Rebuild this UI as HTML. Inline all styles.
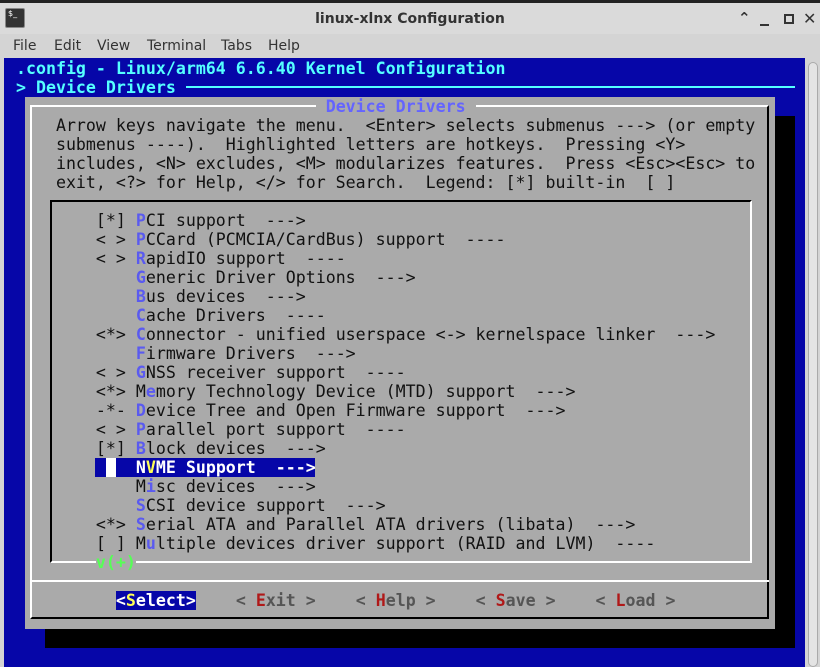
<!DOCTYPE html>
<html><head><meta charset="utf-8"><style>
*{margin:0;padding:0;box-sizing:border-box}
body{width:820px;height:667px;overflow:hidden;background:#d4d4d4;position:relative;font-family:"DejaVu Sans",sans-serif}
.a{position:absolute}
.t{position:absolute;left:6px;height:19px;line-height:19px;font-family:"DejaVu Sans Mono","Liberation Mono",monospace;font-size:16.6px;white-space:pre;color:#111}
.h{color:#5a5af0;font-weight:bold}
.c{color:#5ff;font-weight:bold}
</style></head><body>
<div class="a" style="left:0;top:0;width:820px;height:3px;background:#222"></div>
<div class="a" style="left:0;top:3px;width:820px;height:31px;background:#dadada"></div>
<div class="a" style="left:5px;top:8px;width:20px;height:20px;background:#333;border:1px solid #888;border-radius:2px;color:#fff;font-size:8px;line-height:10px;padding-left:2px">$_</div>
<div class="a" style="left:0;top:11px;width:820px;text-align:center;font-size:14px;font-weight:bold;color:#333">linux-xlnx Configuration</div>
<div class="a" style="left:738px;top:9px;font-size:15px;color:#333;font-weight:bold">&#8963;</div>
<div class="a" style="left:760px;top:24px;width:9px;height:2px;background:#333"></div>
<div class="a" style="left:784px;top:14px;width:10px;height:10px;border:2px solid #333"></div>
<div class="a" style="left:803px;top:9px;font-size:16px;color:#333;font-weight:bold">✕</div>
<div class="a" style="left:0;top:34px;width:820px;height:24px;background:#d4d4d4;font-size:14px;color:#333;line-height:24px">
<span class="a" style="left:13px">File</span><span class="a" style="left:54px">Edit</span><span class="a" style="left:97px">View</span><span class="a" style="left:147px">Terminal</span><span class="a" style="left:221px">Tabs</span><span class="a" style="left:268px">Help</span></div>
<div class="a" style="left:4px;top:58px;width:801px;height:609px;background:#0606a8"></div>
<div class="a" style="left:808px;top:62px;width:10px;height:605px;border:1px solid #aaa;border-radius:5px;background:#e4e4e4"></div>
<!-- shadow -->
<div class="a" style="left:45px;top:116px;width:750px;height:532px;background:#000"></div>
<!-- dialog -->
<div class="a" style="left:25px;top:97px;width:750px;height:532px;background:#aaa"></div>
<div class="a" style="left:30px;top:105px;width:739px;height:514px;border:2px solid #fff;border-right-color:#000;border-bottom-color:#000"></div>
<div class="a" style="left:32px;top:580px;width:737px;height:2px;background:#fff"></div>
<div class="a" style="left:50px;top:200px;width:702px;height:363px;border:2px solid #000;border-right-color:#fff;border-bottom-color:#fff"></div>
<div class="a" style="left:95px;top:458px;width:220px;height:19px;background:#0606a8"></div>
<div class="a" style="left:106px;top:458px;width:10px;height:19px;background:#fff"></div>
<div class="a" style="left:116px;top:591px;width:80px;height:19px;background:#0606a8"></div>
<div class="a" style="left:186px;top:86px;width:609px;height:2px;background:#5ff"></div>

<div class="t c" style="top:59px"> .config - Linux/arm64 6.6.40 Kernel Configuration</div>
<div class="t c" style="top:78px"> &gt; Device Drivers</div>
<div class="t" style="top:97px;"><span style="color:transparent">                               </span><span style="background:#aaa"> <b style="color:#6464ff">Device Drivers</b> </span></div>
<div class="t" style="top:116px">     Arrow keys navigate the menu.  &lt;Enter&gt; selects submenus ---&gt; (or empty</div>
<div class="t" style="top:135px">     submenus ----).  Highlighted letters are hotkeys.  Pressing &lt;Y&gt;</div>
<div class="t" style="top:154px">     includes, &lt;N&gt; excludes, &lt;M&gt; modularizes features.  Press &lt;Esc&gt;&lt;Esc&gt; to</div>
<div class="t" style="top:173px">     exit, &lt;?&gt; for Help, &lt;/&gt; for Search.  Legend: [*] built-in  [ ]</div>
<div class="t" style="top:211px">         [*] <span class="h">P</span>CI support  ---&gt;</div>
<div class="t" style="top:230px">         &lt; &gt; <span class="h">P</span>CCard (PCMCIA/CardBus) support  ----</div>
<div class="t" style="top:249px">         &lt; &gt; <span class="h">R</span>apidIO support  ----</div>
<div class="t" style="top:268px">             <span class="h">G</span>eneric Driver Options  ---&gt;</div>
<div class="t" style="top:287px">             <span class="h">B</span>us devices  ---&gt;</div>
<div class="t" style="top:306px">             <span class="h">C</span>ache Drivers  ----</div>
<div class="t" style="top:325px">         &lt;*&gt; <span class="h">C</span>onnector - unified userspace &lt;-&gt; kernelspace linker  ---&gt;</div>
<div class="t" style="top:344px">             <span class="h">F</span>irmware Drivers  ---&gt;</div>
<div class="t" style="top:363px">         &lt; &gt; <span class="h">G</span>NSS receiver support  ----</div>
<div class="t" style="top:382px">         &lt;*&gt; M<span class="h">e</span>mory Technology Device (MTD) support  ---&gt;</div>
<div class="t" style="top:401px">         -*- <span class="h">D</span>evice Tree and Open Firmware support  ---&gt;</div>
<div class="t" style="top:420px">         &lt; &gt; <span class="h">P</span>arallel port support  ----</div>
<div class="t" style="top:439px">         [*] <span class="h">B</span>lock devices  ---&gt;</div>
<div class="t" style="top:458px;color:#fff;font-weight:bold">             N<span style="color:#ff5">V</span>ME Support  ---&gt;</div>
<div class="t" style="top:477px">             M<span class="h">i</span>sc devices  ---&gt;</div>
<div class="t" style="top:496px">             <span class="h">S</span>CSI device support  ---&gt;</div>
<div class="t" style="top:515px">         &lt;*&gt; <span class="h">S</span>erial ATA and Parallel ATA drivers (libata)  ---&gt;</div>
<div class="t" style="top:534px">         [ ] M<span class="h">u</span>ltiple devices driver support (RAID and LVM)  ----</div>
<div class="t" style="top:553px"><span style="color:transparent">         </span><span style="background:#aaa;color:#5f5;font-weight:bold">v(+)</span></div>
<div class="t" style="top:591px;font-weight:bold;color:#555">           <span style="color:#fff">&lt;<span style="color:#ff5">S</span>elect&gt;</span>    &lt; <span style="color:#b01818">E</span>xit &gt;    &lt; <span style="color:#b01818">H</span>elp &gt;    &lt; <span style="color:#b01818">S</span>ave &gt;    &lt; <span style="color:#b01818">L</span>oad &gt;</div>
</body></html>
